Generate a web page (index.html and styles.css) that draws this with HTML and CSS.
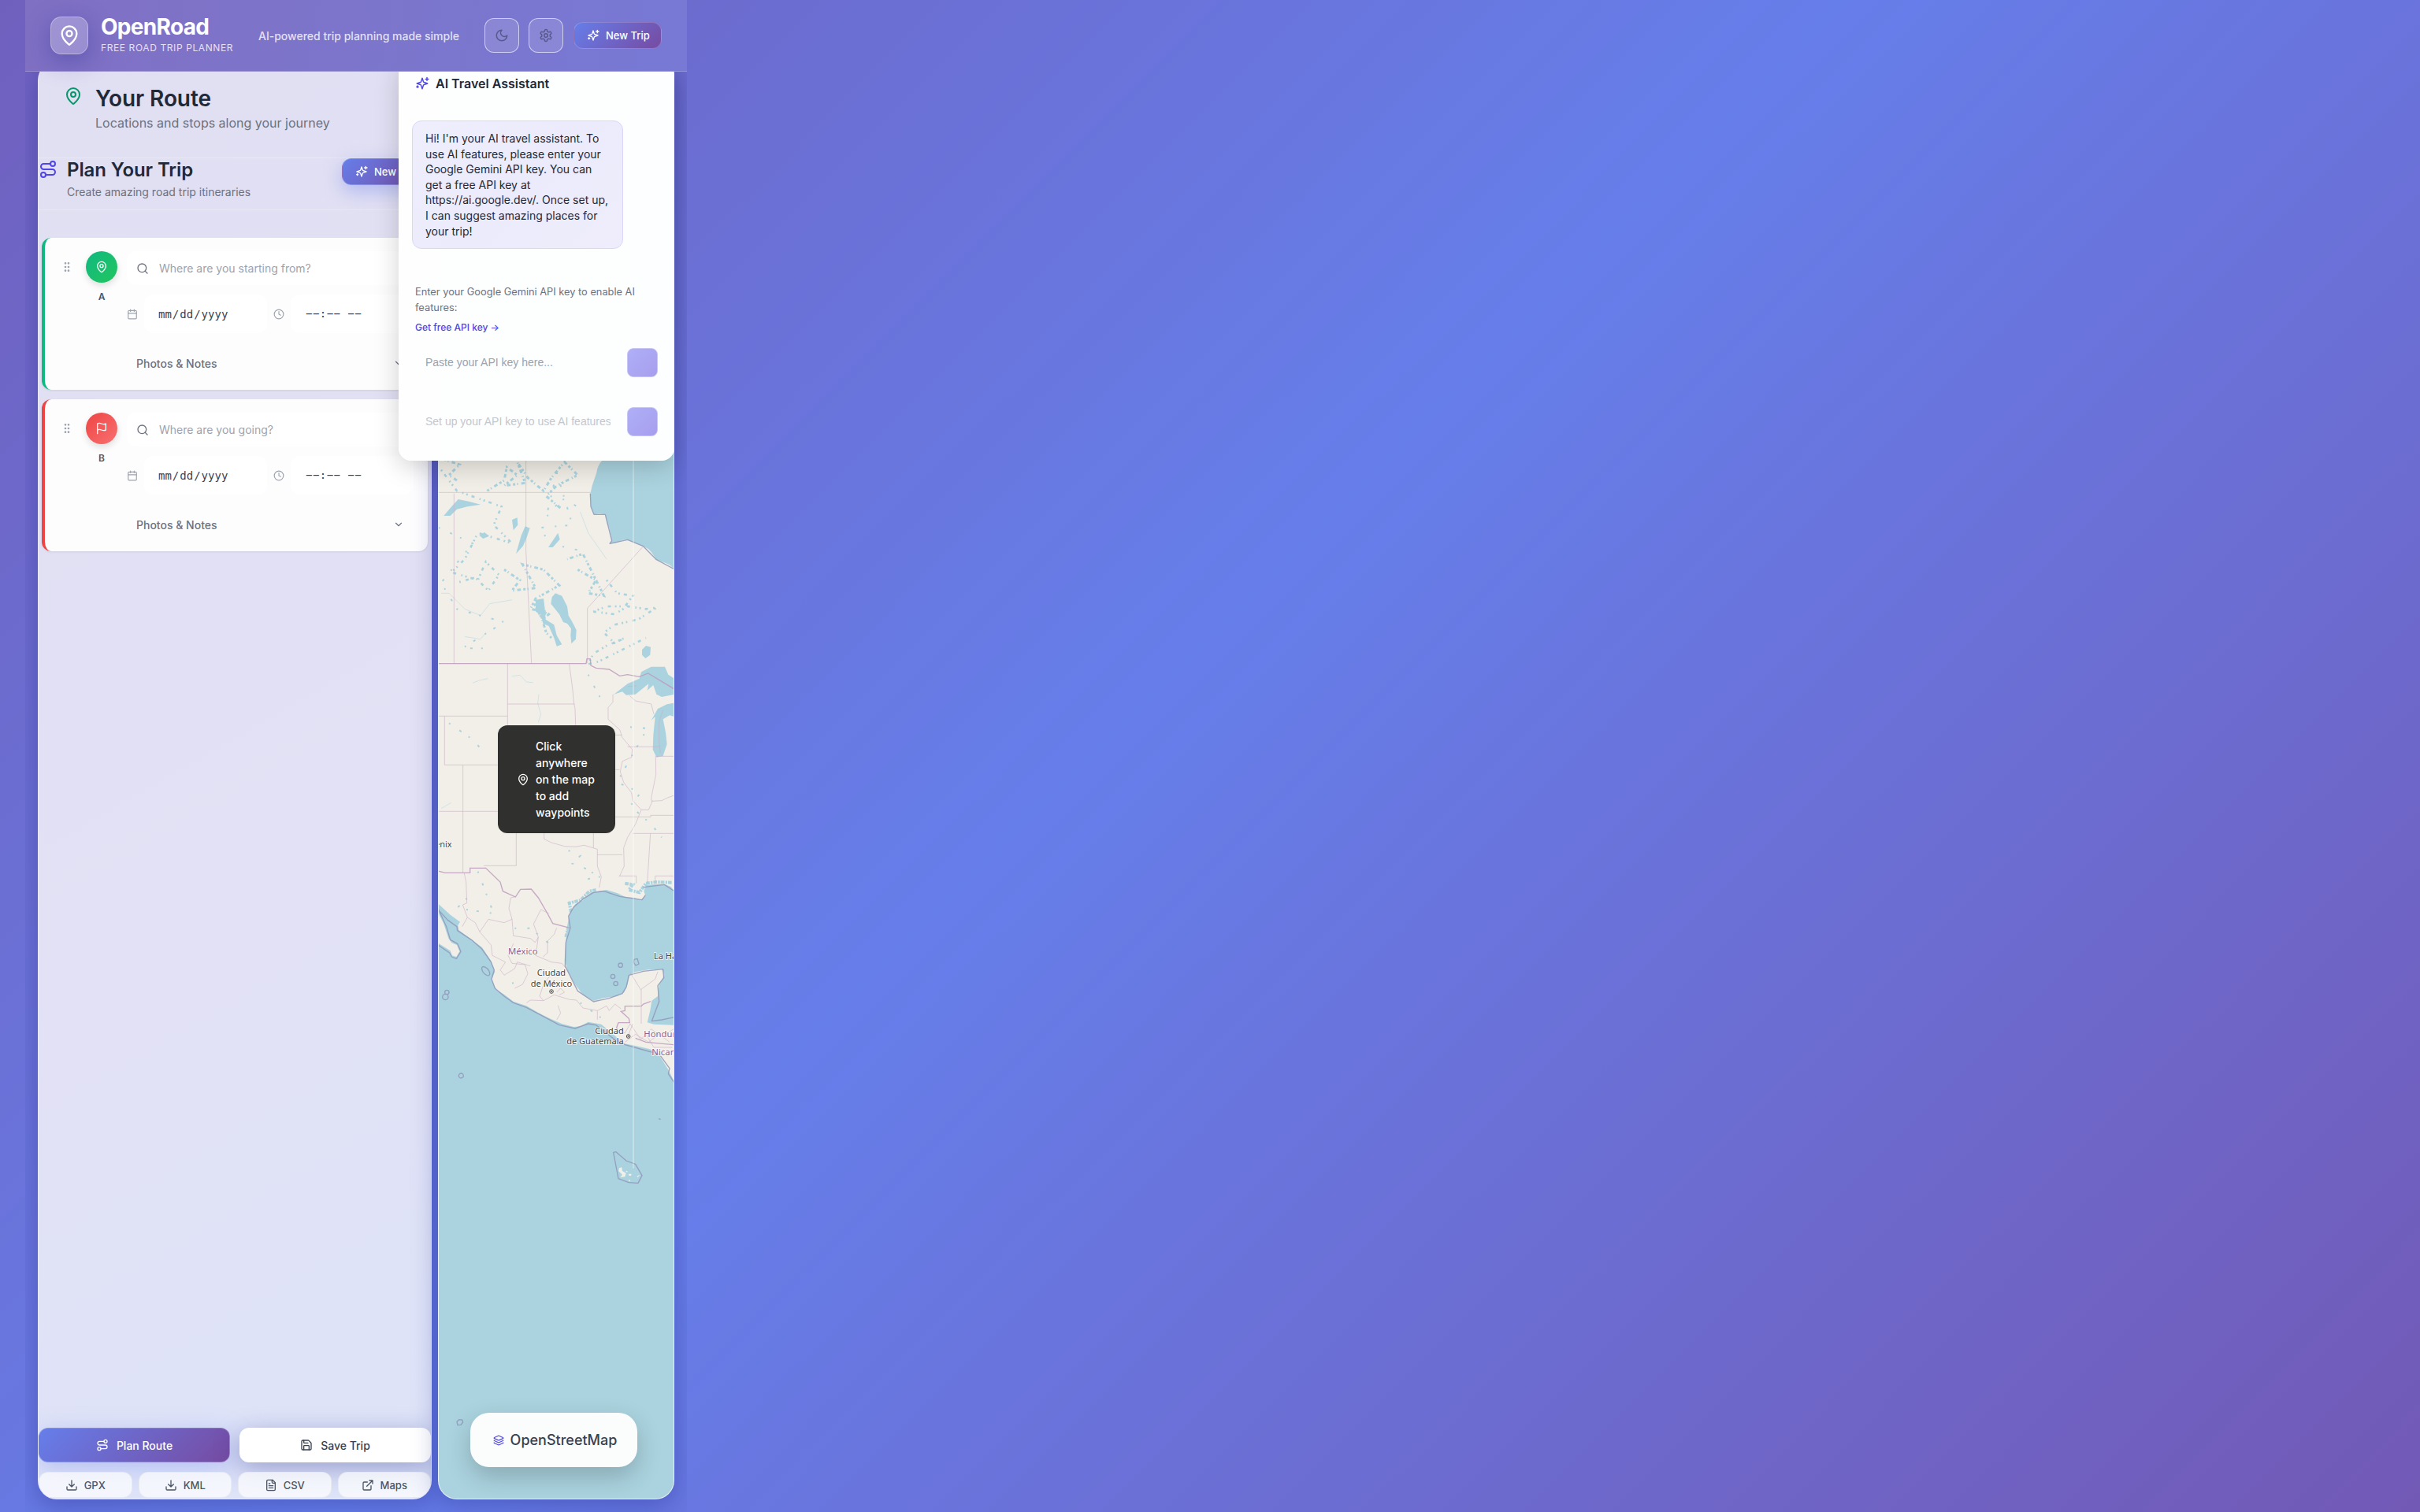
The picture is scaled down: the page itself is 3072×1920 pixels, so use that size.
FILE: index.html
```html
<!DOCTYPE html>
<html lang="en">
<head>
<meta charset="utf-8">
<title>OpenRoad</title>
<link rel="stylesheet" href="styles.css">
</head>
<body>
<svg class="defs" aria-hidden="true">
  <symbol id="pin" viewBox="0 0 24 24"><path d="M20 10c0 4.993-5.539 10.193-7.399 11.799a1 1 0 0 1-1.202 0C9.539 20.193 4 14.993 4 10a8 8 0 0 1 16 0"/><circle cx="12" cy="10" r="3"/></symbol>
  <symbol id="route" viewBox="0 0 24 24"><circle cx="6" cy="19" r="3"/><path d="M9 19h8.5a3.5 3.5 0 0 0 0-7h-11a3.5 3.5 0 0 1 0-7H15"/><circle cx="18" cy="5" r="3"/></symbol>
  <symbol id="sparkles" viewBox="0 0 24 24"><path d="m12 3-1.912 5.813a2 2 0 0 1-1.275 1.275L3 12l5.813 1.912a2 2 0 0 1 1.275 1.275L12 21l1.912-5.813a2 2 0 0 1 1.275-1.275L21 12l-5.813-1.912a2 2 0 0 1-1.275-1.275L12 3Z"/><path d="M20 2v5M22.500 4.500h-5M4 16v3M5.500 17.500h-3"/></symbol>
  <symbol id="moon" viewBox="0 0 24 24"><path d="M12 3a6 6 0 0 0 9 9 9 9 0 1 1-9-9Z"/></symbol>
  <symbol id="gear" viewBox="0 0 24 24"><path d="M12.220 2h-.44a2 2 0 0 0-2 2v.18a2 2 0 0 1-1 1.730l-.43.25a2 2 0 0 1-2 0l-.15-.08a2 2 0 0 0-2.730.73l-.22.38a2 2 0 0 0 .73 2.730l.15.1a2 2 0 0 1 1 1.720v.51a2 2 0 0 1-1 1.740l-.15.09a2 2 0 0 0-.73 2.730l.22.38a2 2 0 0 0 2.730.73l.15-.08a2 2 0 0 1 2 0l.43.25a2 2 0 0 1 1 1.730V20a2 2 0 0 0 2 2h.44a2 2 0 0 0 2-2v-.18a2 2 0 0 1 1-1.730l.43-.25a2 2 0 0 1 2 0l.15.08a2 2 0 0 0 2.730-.73l.22-.39a2 2 0 0 0-.73-2.730l-.15-.08a2 2 0 0 1-1-1.740v-.5a2 2 0 0 1 1-1.740l.15-.09a2 2 0 0 0 .73-2.730l-.22-.38a2 2 0 0 0-2.730-.73l-.15.08a2 2 0 0 1-2 0l-.43-.25a2 2 0 0 1-1-1.730V4a2 2 0 0 0-2-2z"/><circle cx="12" cy="12" r="3"/></symbol>
  <symbol id="grip" viewBox="0 0 24 24"><circle cx="9" cy="12" r="1"/><circle cx="9" cy="5" r="1"/><circle cx="9" cy="19" r="1"/><circle cx="15" cy="12" r="1"/><circle cx="15" cy="5" r="1"/><circle cx="15" cy="19" r="1"/></symbol>
  <symbol id="search" viewBox="0 0 24 24"><circle cx="11" cy="11" r="8"/><path d="m21 21-4.350-4.350"/></symbol>
  <symbol id="calendar" viewBox="0 0 24 24"><path d="M8 2v4M16 2v4M3 10h18"/><rect x="3" y="4" width="18" height="18" rx="2"/></symbol>
  <symbol id="clock" viewBox="0 0 24 24"><circle cx="12" cy="12" r="10"/><path d="M12 6v6l4 2"/></symbol>
  <symbol id="chevron" viewBox="0 0 24 24"><path d="m6 9 6 6 6-6"/></symbol>
  <symbol id="flag" viewBox="0 0 24 24"><path d="M4 15s1-1 4-1 5 2 8 2 4-1 4-1V3s-1 1-4 1-5-2-8-2-4 1-4 1z"/><path d="M4 22v-7"/></symbol>
  <symbol id="save" viewBox="0 0 24 24"><path d="M15.200 3a2 2 0 0 1 1.400.6l3.800 3.800a2 2 0 0 1 .6 1.400V19a2 2 0 0 1-2 2H5a2 2 0 0 1-2-2V5a2 2 0 0 1 2-2z"/><path d="M17 21v-7a1 1 0 0 0-1-1H8a1 1 0 0 0-1 1v7M7 3v4a1 1 0 0 0 1 1h7"/></symbol>
  <symbol id="download" viewBox="0 0 24 24"><path d="M21 15v4a2 2 0 0 1-2 2H5a2 2 0 0 1-2-2v-4M7 10l5 5 5-5M12 15V3"/></symbol>
  <symbol id="file" viewBox="0 0 24 24"><path d="M15 2H6a2 2 0 0 0-2 2v16a2 2 0 0 0 2 2h12a2 2 0 0 0 2-2V7Z"/><path d="M14 2v4a2 2 0 0 0 2 2h4M10 9H8M16 13H8M16 17H8"/></symbol>
  <symbol id="external" viewBox="0 0 24 24"><path d="M15 3h6v6M10 14 21 3M18 13v6a2 2 0 0 1-2 2H5a2 2 0 0 1-2-2V8a2 2 0 0 1 2-2h6"/></symbol>
  <symbol id="layers" viewBox="0 0 24 24"><path d="M12.830 2.180a2 2 0 0 0-1.660 0L2.600 6.080a1 1 0 0 0 0 1.830l8.580 3.910a2 2 0 0 0 1.660 0l8.580-3.900a1 1 0 0 0 0-1.830z"/><path d="M2 12a1 1 0 0 0 .58.91l8.600 3.910a2 2 0 0 0 1.650 0l8.580-3.900A1 1 0 0 0 22 12M2 17a1 1 0 0 0 .58.91l8.600 3.910a2 2 0 0 0 1.650 0l8.580-3.900A1 1 0 0 0 22 17"/></symbol>
</svg>

<div class="app">
  <header class="topbar">
    <div class="logo"><svg class="icon i26"><use href="#pin"/></svg></div>
    <div class="brand">
      <div class="brand-name">OpenRoad</div>
      <div class="brand-sub">Free Road Trip Planner</div>
    </div>
    <div class="tagline">AI-powered trip planning made simple</div>
    <button class="icon-btn"><svg class="icon i18"><use href="#moon"/></svg></button>
    <button class="icon-btn"><svg class="icon i18"><use href="#gear"/></svg></button>
    <button class="btn-new"><svg class="icon i16"><use href="#sparkles"/></svg>New Trip</button>
  </header>

  <main class="main">
    <section class="sidebar">
      <div class="route-head">
        <svg class="icon i24 green"><use href="#pin"/></svg>
        <div>
          <h1>Your Route</h1>
          <p>Locations and stops along your journey</p>
        </div>
      </div>
      <div class="plan-head">
        <svg class="icon i24 indigo"><use href="#route"/></svg>
        <div>
          <h2>Plan Your Trip</h2>
          <p>Create amazing road trip itineraries</p>
        </div>
        <button class="btn-new plan-new"><svg class="icon i16"><use href="#sparkles"/></svg>New Trip</button>
      </div>

      <div class="stops">
        <article class="stop start">
          <svg class="icon i16 grip"><use href="#grip"/></svg>
          <div class="marker"><div class="badge"><svg class="icon i16"><use href="#pin"/></svg></div>A</div>
          <div class="fields">
            <label class="search"><svg class="icon i16"><use href="#search"/></svg><input type="text" placeholder="Where are you starting from?"></label>
            <div class="when">
              <svg class="icon i14"><use href="#calendar"/></svg><input type="date">
              <svg class="icon i14"><use href="#clock"/></svg><div class="time">−−:−− −−</div>
            </div>
            <div class="notes">Photos &amp; Notes<svg class="icon i14"><use href="#chevron"/></svg></div>
          </div>
        </article>
        <article class="stop end">
          <svg class="icon i16 grip"><use href="#grip"/></svg>
          <div class="marker"><div class="badge"><svg class="icon i16"><use href="#flag"/></svg></div>B</div>
          <div class="fields">
            <label class="search"><svg class="icon i16"><use href="#search"/></svg><input type="text" placeholder="Where are you going?"></label>
            <div class="when">
              <svg class="icon i14"><use href="#calendar"/></svg><input type="date">
              <svg class="icon i14"><use href="#clock"/></svg><div class="time">−−:−− −−</div>
            </div>
            <div class="notes">Photos &amp; Notes<svg class="icon i14"><use href="#chevron"/></svg></div>
          </div>
        </article>
      </div>

      <div class="actions">
        <button class="btn primary"><svg class="icon i16"><use href="#route"/></svg>Plan Route</button>
        <button class="btn plain"><svg class="icon i16"><use href="#save"/></svg>Save Trip</button>
      </div>
      <div class="exports">
        <button><svg class="icon i16"><use href="#download"/></svg>GPX</button>
        <button><svg class="icon i16"><use href="#download"/></svg>KML</button>
        <button><svg class="icon i16"><use href="#file"/></svg>CSV</button>
        <button><svg class="icon i16"><use href="#external"/></svg>Maps</button>
      </div>
    </section>

    <section class="map">
      <svg class="tiles" viewBox="51 -1503 894 5472" preserveAspectRatio="none">
        <!-- mainland -->
        <path class="land" d="M48-1503H690V0Q658 20 652 60L635 110 628 140 630 190 642 220 663 217 685 220 692 255 700 270 710 320 702 331 728 328 750 317 770 316 795 328 830 341 850 352 862 365 880 392 915 405 930 412 948 428V1655L935 1638 910 1628 880 1628 840 1632 832 1655 838 1672 820 1688 795 1680 760 1676 730 1662 690 1650 655 1655 630 1660 600 1690 570 1705 548 1745 540 1790 534 1850 530 1920 545 1965 570 2010 600 2050 640 2073 680 2062 730 2055 757 2040 770 2010 778 1975 800 1962 850 1954 900 1952 910 1975 890 2010 885 2055 862 2072 856 2110 845 2155 870 2162 948 2165V2380L925 2335 900 2295 880 2265 850 2255 790 2242 755 2235 715 2200 670 2162 620 2153 590 2170 565 2172 520 2160 470 2138 430 2118 385 2092 335 2075 300 2048 270 2030 252 1992 265 1962 250 1920 215 1868 170 1835 128 1804 124 1785 132 1772 95 1745 48 1702Z"/>
        <path class="land" d="M48 1735 70 1780 88 1835 100 1852 120 1860 130 1885 118 1905 102 1900 95 1882 48 1852Z"/>
        <!-- great lakes and larger inland waters -->
        <path class="water" d="M718 905 770 865 815 845 822 820 860 800 912 800 925 830 948 845V905L900 915 880 905 868 870 845 890 850 865 800 905 765 908 750 895ZM860 1005 885 960 920 943 948 938V990L930 985 905 1000 915 1050 920 1095 905 1140 880 1145 866 1115 868 1060 875 990ZM482 535 495 520 520 530 540 570 545 605 557 625 575 660 573 695 556 712 553 680 555 655 540 635 525 630 510 600 478 560ZM420 545 450 540 455 580 458 620 490 640 500 680 520 715 500 722 490 690 470 645 448 635 440 600 420 590ZM70 225 95 195 125 162 165 170 210 182 160 190 120 200 95 225ZM345 370 365 300 380 265 398 272 385 310 372 340ZM330 240 350 232 352 260 335 280ZM468 345 505 290 512 315 485 345ZM825 735 840 720 858 725 856 755 838 768 825 755ZM205 300 225 288 243 302 220 312Z"/>
        <g class="lakes">
          <path class="d1" d="M70 10 130 30 90 70 120 90M235 130 300 90 310 40 350 70 300 110 380 100 350 20 390 80 450 130 480 80 530 20 580 70 500 110 460 150 520 200"/>
          <path class="d2" d="M60 50 120 130 290 190 260 260 330 330 200 290 150 390 100 440 200 470 230 400 280 450 240 510 190 460 120 480"/>
          <path class="d1" d="M300 430 360 470 330 510 420 500 370 410 450 430 510 490 420 540 400 580 460 590 440 620M580 430 650 470 620 520 680 530 600 370 540 390"/>
          <path class="d2" d="M690 470 730 520 790 530 760 570 690 570 640 590 720 600 770 570 840 580 880 575 810 620 720 640 680 670 720 710 760 690 690 720 640 750 620 790 660 780 840 690"/>
          <path class="d3" d="M50 270 180 330 60 480 120 580 300 630 140 730 240 730M90 1015 170 1070 210 1110M500 60 560 260 440 270 470 330 600 360M620 830 640 870 670 925M500 60 460 230 520 160 600 200M780 1030 845 1035 730 1240 820 1280 780 1330 860 1400 900 1450"/>
          <path class="d1" d="M415 560 440 610 430 570 470 600 445 620 460 670 480 690"/>
          <path class="d3" d="M545 1500 590 1520 560 1550 640 1580 610 1610 665 1600M200 1580 260 1740 120 1720 180 1660M340 1796 400 1796 490 1870M330 2005 370 2010M590 2080 700 2160"/>
          <path class="marsh" d="M555 1735 548 1700 590 1690 625 1655 650 1650M760 1625 790 1630 775 1650 815 1660 840 1625 880 1620 940 1622M535 1830 545 1790"/>
        </g>
        <g class="rivers">
          <path d="M180 862 205 852 238 845M330 836 360 832 385 858 410 860M432 905 428 940 440 980 430 1012M150 685 210 695 230 670M60 520 90 520 150 580 210 605 245 560 330 545M590 210 620 290 690 390M60 1340 98 1318"/>
        </g>
        <!-- state, province and country lines -->
        <g class="state">
          <path d="M48 136H628M383 0V360L390 500 404 787M109 140V787M617 787V577L828 343M313 787V1022M313 942H568M548 790 560 880 566 940 570 960 572 1022M48 988H313M73 988V1174H275M143 1174V1584M48 1351H275M346 1434V1558H222M452 1434V1456L480 1470 530 1484 570 1486 605 1480 655 1495V1560L670 1600 662 1642M640 1434V1490M655 1516H750M720 1060H748M770 1105H895M722 1192H740M722 1372H858V1366H948M790 1435H948M857 1435 845 1625M737 1597H803V1625M875 1625V1597H948M877 1141 878 1210 860 1300 862 1312 900 1310 920 1300 948 1290M877 1141H948M714 905V935L696 955V1000L740 1040 750 1070 788 1115 785 1145 750 1160 742 1200 755 1240 785 1280 790 1310 822 1345 800 1400 770 1450 755 1490 757 1560 740 1597M778 910 800 930 860 942 870 980M895 1130 890 1080 890 1010 905 965M948 1620V1560M770 875 805 873M822 1345 850 1345 865 1310"/>
          <path d="M148 1587 155 1620 158 1700 142 1707 160 1755 140 1790M160 1755 190 1775 207 1810 240 1762 300 1775 330 1762 318 1720 325 1680 343 1676M207 1810 250 1860 255 1900 305 1925M330 1762 335 1825 400 1835 418 1850 430 1830 412 1780 440 1725 470 1740M335 1855 315 1900 330 1930 380 1935 390 1970 370 2010 340 2025M305 1925 285 1955 300 1975 340 1950 350 1925 400 1940M430 1830 420 1900 480 1925 520 1930 545 1960M500 1795 490 1820 465 1845 465 1890 448 1905M385 2080 400 2070 450 2072 490 2050 550 2068 575 2070 600 2100 655 2110M450 2072 435 2055 450 2010 480 1970M500 2040 515 2025 530 2040 510 2050M505 2090 515 2120 500 2145M655 2110 655 2145M655 2110 690 2092 700 2110 722 2085 745 2103M780 1965 820 2030 875 1990 885 1962M822 2030V2160M720 2190 760 2195 780 2160 820 2220 860 2180 900 2210 945 2180M760 2230 800 2200 850 2230 890 2200 930 2230M790 2160 770 2210M840 2200 870 2250 940 2250"/>
        </g>
        <path class="country" d="M48 788H612L615 770H628L630 795 650 805 700 810 740 835 770 830 815 838 848 825 948 885M48 1578 75 1585H170V1567H230L285 1620 295 1655 343 1677 362 1648 403 1647 430 1680 465 1740 485 1778 550 1795M735 2190 728 2175 735 2156H778L775 2140 745 2113 760 2110V2093H820M822 2093 830 2085 858 2075M800 2215 840 2230 948 2240"/>
        <path class="coast" d="M48 1725 85 1765 120 1790 122 1805 175 1840 215 1875 250 1925 262 1955 252 1990 265 2025 300 2055 335 2080 385 2098 460 2138 510 2165 570 2178 620 2160 650 2165 710 2212 760 2240 850 2265 890 2275 930 2330 925 2350 948 2385M48 1720 80 1790 95 1840 122 1855 135 1885 118 1912 100 1905 92 1890 48 1860M830 1640 910 1630 948 1655M838 1670 825 1688 740 1675 680 1655 640 1660 600 1685 565 1715 545 1750 552 1795 535 1850 532 1940 550 1975 580 2035 640 2076 700 2063 750 2045 765 2020 775 1975 830 1960 905 1952 908 1985 885 2015 890 2075 862 2150 900 2145 948 2135M215 1952a20 10 50 1 0 30 15 20 10 50 1 0-30-15M795 1915l12-3 6 20-12 6-8-12zM735 1937a8 8 0 1 0 16 0 8 8 0 1 0-16 0M706 1980a8 8 0 1 0 16 0 8 8 0 1 0-16 0M717 2007a8 8 0 1 0 16 0 8 8 0 1 0-16 0M74 2040a8 8 0 1 0 16 0 8 8 0 1 0-16 0M65 2058a11 11 0 1 0 22 0 11 11 0 1 0-22 0M127 2358a9 9 0 1 0 18 0 9 9 0 1 0-18 0M716 2650 726 2648 765 2682 800 2695 825 2738 810 2767 775 2765 735 2750ZM628 140 630 190 642 220 685 220 710 320 702 331 770 316 830 341 880 392 948 428M888 2522l8 2"/>
        <path class="coast" d="M120 3676l8-8 12 1 3 9-8 10-12 1z"/>
        <path class="land" d="m738 2710 10-3 2 14 14 8-4 14-18 2 8-10-14-14zM762 2720l8 2-2 5zM774 2732h11l-2 7-9-1zM805 2741l12-6-8 10zM775 2755h5v4h-5z"/>
        <g class="city-dot"><circle cx="480" cy="2037" r="7"/><circle cx="480" cy="2037" r="2"/><circle cx="773" cy="2208" r="7"/><circle cx="773" cy="2208" r="2"/></g>
        <g class="label city">
          <text x="101" y="1488" text-anchor="end">Phoenix</text>
          <text x="480" y="1978" text-anchor="middle">Ciudad</text>
          <text x="480" y="2018" text-anchor="middle">de México</text>
          <text x="755" y="2199" text-anchor="end">Ciudad</text>
          <text x="755" y="2239" text-anchor="end">de Guatemala</text>
          <text x="870" y="1913">La Habana</text>
        </g>
        <g class="label nation">
          <text x="315" y="1897">México</text>
          <text x="832" y="2212">Honduras</text>
          <text x="862" y="2280">Nicaragua</text>
        </g>
        <path class="seam" d="M792-1503V2711"/>
      </svg>
      <div class="tip"><svg class="icon i16"><use href="#pin"/></svg><span>Click anywhere on the map to add waypoints</span></div>
      <div class="layer"><svg class="icon i14 indigo"><use href="#layers"/></svg>OpenStreetMap</div>
    </section>

    <aside class="assistant">
      <h3><svg class="icon i18 indigo"><use href="#sparkles"/></svg>AI Travel Assistant</h3>
      <div class="message">Hi! I'm your AI travel assistant. To use AI features, please enter your Google Gemini API key. You can get a free API key at https://ai.google.dev/. Once set up, I can suggest amazing places for your trip!</div>
      <div class="key">
        <p>Enter your Google Gemini API key to enable AI features:</p>
        <a>Get free API key →</a>
        <div class="ask"><input type="text" placeholder="Paste your API key here..."><button></button></div>
        <div class="ask off"><input type="text" placeholder="Set up your API key to use AI features"><button></button></div>
      </div>
    </aside>
  </main>
</div>
</body>
</html>
```
FILE: styles.css
```css
* { box-sizing: border-box; }
html, body { margin: 0; height: 100%; }
body {
  font-family: Inter, sans-serif;
  color: #1f2937;
  overflow: hidden;
  background: linear-gradient(135deg, #7060be 0%, #667eea 46.9%, #7259b6 100%);
}
h1, h2, h3, p { margin: 0; }
button, input { font-family: inherit; margin: 0; }
.defs { display: none; }

.icon { flex: none; fill: none; stroke: currentColor; stroke-width: 2; stroke-linecap: round; stroke-linejoin: round; }
.i14 { width: 14px; height: 14px; }
.i16 { width: 16px; height: 16px; }
.i18 { width: 18px; height: 18px; }
.i24 { width: 24px; height: 24px; }
.i26 { width: 28px; height: 28px; }
.green { color: #059669; }
.indigo { color: #4f46e5; }

.app {
  width: 840px;
  height: 1920px;
  margin-left: 32px;
  display: flex;
  flex-direction: column;
  overflow: hidden;
}

/* top bar */
.topbar {
  height: 91px;
  flex: none;
  position: relative;
  z-index: 3;
  display: flex;
  align-items: center;
  padding: 0 32px;
  background: linear-gradient(100deg, #8070c4, #7c75cb 50%, #7779d5);
  border-bottom: 1px solid rgba(255, 255, 255, .22);
}
.topbar > * { flex: none; }
.logo {
  width: 48px;
  height: 48px;
  display: grid;
  place-items: center;
  color: #fff;
  border-radius: 14px;
  border: 1px solid rgba(255, 255, 255, .3);
  background: linear-gradient(135deg, rgba(255, 255, 255, .26), rgba(255, 255, 255, .2));
  box-shadow: 0 8px 32px rgba(31, 38, 135, .37);
}
.brand { margin-left: 16px; width: 168px; padding-bottom: 3px; }
.brand-name { font-size: 28px; font-weight: 700; line-height: 34px; letter-spacing: -.7px; color: #fff; }
.brand-sub { margin-top: 1px; font-size: 12px; line-height: 18px; letter-spacing: .6px; text-transform: uppercase; white-space: nowrap; color: rgba(255, 255, 255, .8); }
.tagline { margin-left: 32px; width: 287px; font-size: 14px; font-weight: 500; white-space: nowrap; color: rgba(255, 255, 255, .8); }
.icon-btn {
  width: 44px;
  height: 44px;
  margin-right: 12px;
  padding: 0;
  display: grid;
  place-items: center;
  color: #575a8c;
  border-radius: 12px;
  border: 1px solid rgba(255, 255, 255, .6);
  background: rgba(255, 255, 255, .12);
}
.btn-new {
  height: 34px;
  width: 112px;
  padding: 0 0 0 16px;
  display: flex;
  align-items: center;
  gap: 8px;
  font-size: 13px;
  font-weight: 500;
  white-space: nowrap;
  color: #fff;
  border-radius: 12px;
  border: 1px solid rgba(255, 255, 255, .2);
  background: linear-gradient(135deg, #667eea, #764ba2);
}
.topbar .btn-new { margin-left: 1px; }

/* two columns below the bar */
.main {
  flex: 1;
  min-height: 0;
  margin-top: -13px;
  padding: 0 16px 16px;
  position: relative;
  display: grid;
  grid-template-columns: 500px 300px;
  gap: 8px;
}
.sidebar, .map {
  border: 1px solid rgba(255, 255, 255, .3);
  border-radius: 24px;
  box-shadow: 0 8px 32px rgba(31, 38, 135, .37);
}
.sidebar {
  display: flex;
  flex-direction: column;
  overflow: hidden;
  background: linear-gradient(150deg, #e1dff2, #e2e1f5 60%, #dde4f9);
}
.route-head {
  height: 122px;
  padding: 31px 0 0 32px;
  display: flex;
  gap: 16px;
  border-bottom: 1px solid rgba(255, 255, 255, .25);
}
.route-head h1 { margin-top: -1px; font-size: 28px; font-weight: 600; line-height: 32px; letter-spacing: -.1px; }
.route-head p { font-size: 16px; line-height: 24px; margin-top: 3px; color: #6b7280; }
.plan-head {
  height: 66px;
  padding-top: 2px;
  display: flex;
  gap: 12px;
  border-bottom: 1px solid rgba(255, 255, 255, .25);
}
.plan-head > div { width: 337px; }
.plan-head h2 { margin-top: -1px; font-size: 24px; font-weight: 600; line-height: 28px; letter-spacing: -.1px; }
.plan-head p { font-size: 14px; line-height: 20px; margin-top: 4px; color: #6b7280; }
.plan-new { margin: -2px 0 0; box-shadow: 0 8px 24px rgba(102, 126, 234, .4); }

.stops { flex: 1; padding: 35px 4px 0; display: flex; flex-direction: column; gap: 12px; }
.stop {
  height: 193px;
  display: flex;
  padding: 17px 18px 0 20px;
  background: #fdfdfe;
  border-radius: 12px;
  border-left: 4px solid #10b981;
  box-shadow: 0 1px 3px rgba(0, 0, 0, .08);
}
.stop.end { border-left-color: #ef4444; }
.grip { color: #9ca3af; margin: 12px 16px 0 0; }
.marker { width: 40px; display: flex; flex-direction: column; align-items: center; gap: 10px; font-size: 12px; font-weight: 600; line-height: 15px; color: #4b5563; }
.badge { width: 40px; height: 40px; border-radius: 50%; display: grid; place-items: center; color: #fff; background: linear-gradient(135deg, #10b981, #22c55e); box-shadow: 0 4px 8px rgba(0, 0, 0, .12); }
.end .badge { background: linear-gradient(135deg, #ef4444, #f87171); }
.fields { flex: 1; margin-left: 12px; }
.search { height: 43px; display: flex; align-items: center; gap: 13px; padding-left: 12px; border-radius: 12px; background: #fff; color: #6b7280; }
.search input { flex: 1; border: 0; padding: 0; outline: 0; background: none; font-size: 14px; }
.search input::placeholder { color: #9ca3af; opacity: 1; }
.when { margin-top: 12px; height: 49px; display: flex; align-items: center; gap: 8px; color: #9ca3af; }
.when input, .time {
  width: 156px;
  height: 49px;
  padding: 0 0 0 17px;
  border: 0;
  border-radius: 12px;
  background: #fff;
  color: #374151;
  font-family: "DejaVu Sans Mono", monospace;
  font-size: 14px;
}
.time { padding-left: 19px; line-height: 49px; letter-spacing: .45px; }
.when input::-webkit-calendar-picker-indicator { opacity: 0; }
.notes { margin-top: 18px; height: 40px; padding: 0 12px; display: flex; align-items: center; justify-content: space-between; font-size: 14px; font-weight: 500; color: #6b7280; }

.actions { display: grid; grid-template-columns: 1fr 1fr; gap: 12px; }
.btn { height: 44px; display: flex; align-items: center; justify-content: center; gap: 10px; border-radius: 12px; font-size: 14px; font-weight: 500; }
.primary { color: #fff; border: 1px solid rgba(255, 255, 255, .2); background: linear-gradient(135deg, #667eea, #764ba2); box-shadow: 0 8px 32px rgba(102, 126, 234, .35); }
.plain { color: #374151; border: 0; background: #fff; box-shadow: 0 8px 32px rgba(31, 38, 135, .37); }
.exports { position: relative; display: grid; grid-template-columns: repeat(4, 1fr); gap: 8px; margin: 12px 0 1px; }
.exports button { height: 33px; display: flex; align-items: center; justify-content: center; gap: 8px; border-radius: 12px; border: 1px solid rgba(229, 231, 235, .8); background: rgba(255, 255, 255, .7); color: #4b5563; font-size: 13px; font-weight: 500; }

/* map */
.map { position: relative; overflow: hidden; background: #aad3df; border-color: rgba(255, 255, 255, .7); }
.tiles { display: block; width: 298px; height: 1824px; }
.land { fill: #f2efe8; }
.water { fill: #aad3df; }
.lakes path { fill: none; stroke: #aad3df; stroke-width: 8; }
.lakes .d1 { stroke-dasharray: 9 7 4 12 14 9; stroke-width: 9; }
.lakes .d2 { stroke-dasharray: 6 15 12 20 5 11; }
.lakes .d3 { stroke-dasharray: 6 42 9 33; stroke-width: 6; }
.lakes .marsh { stroke-dasharray: 14 4 7 3; stroke-width: 12; }
.rivers path { fill: none; stroke: #aad3df; stroke-width: 2; opacity: .7; }
.state path { fill: none; stroke: #c9aec6; stroke-width: 2.5; opacity: .7; stroke-linejoin: round; }
.country { fill: none; stroke: #bd9bbd; stroke-width: 4; opacity: .85; }
.coast { fill: none; stroke: #8f96b8; stroke-width: 4; opacity: .85; stroke-linejoin: round; }
.city-dot circle { fill: none; stroke: #555; stroke-width: 3; }
.label { font-family: "Noto Sans", sans-serif; font-size: 33px; paint-order: stroke; stroke: rgba(255, 255, 255, .7); stroke-width: 6; }
.city { fill: #444; }
.nation { fill: #8d618b; font-size: 34px; }
.seam { stroke: #fff; stroke-opacity: .6; stroke-width: 3; }
.tip {
  position: absolute;
  left: 75px;
  top: 842px;
  width: 149px;
  padding: 16px 24px;
  display: flex;
  align-items: center;
  gap: 8px;
  font-size: 14px;
  font-weight: 500;
  line-height: 21px;
  color: #fff;
  border-radius: 12px;
  background: #30302f;
}
.layer {
  position: absolute;
  left: 40px;
  bottom: 40px;
  width: 212px;
  height: 69px;
  padding-left: 3px;
  display: flex;
  align-items: center;
  justify-content: center;
  gap: 8px;
  font-size: 18px;
  font-weight: 500;
  color: #374151;
  border-radius: 24px;
  background: #fbfdfd;
  box-shadow: 0 12px 32px rgba(0, 0, 0, .2);
}

/* assistant, floats over both columns */
.assistant {
  position: absolute;
  left: 474px;
  top: 0;
  width: 350px;
  height: 507px;
  padding: 18px 17px 0;
  border-radius: 16px;
  background: linear-gradient(90deg, #fefefe, #fdfeff);
  box-shadow: 0 8px 32px rgba(0, 0, 0, .18);
}
.assistant h3 { display: flex; align-items: center; gap: 8px; padding-left: 4px; font-size: 16px; font-weight: 600; line-height: 20px; }
.message { width: 268px; margin-top: 37px; padding: 12px 16px; font-size: 14px; line-height: 19.6px; border: 1px solid #d9d6f9; border-radius: 12px; background: linear-gradient(135deg, #efeefd, #ebebfb 50%, #efedfc); }
.key { padding: 45px 4px 0; }
.key p { font-size: 12.8px; line-height: 20px; color: #6b7280; }
.key a { display: block; margin-top: 6px; font-size: 12px; font-weight: 500; line-height: 18px; color: #4f46e5; }
.ask { display: flex; align-items: center; gap: 8px; height: 38px; margin-top: 16px; }
.ask input { width: 261px; height: 38px; padding: 0 13px; border: 0; background: none; font-family: "Liberation Sans", sans-serif; font-size: 14px; }
.ask input::placeholder { color: #9ca3af; opacity: 1; }
.ask button { width: 39px; height: 37px; padding: 0; border-radius: 8px; border: 1px solid #c7c4f6; background: linear-gradient(135deg, #afaff7, #a79eee); }
.off { margin-top: 37px; }
.off input { opacity: .6; }
```
